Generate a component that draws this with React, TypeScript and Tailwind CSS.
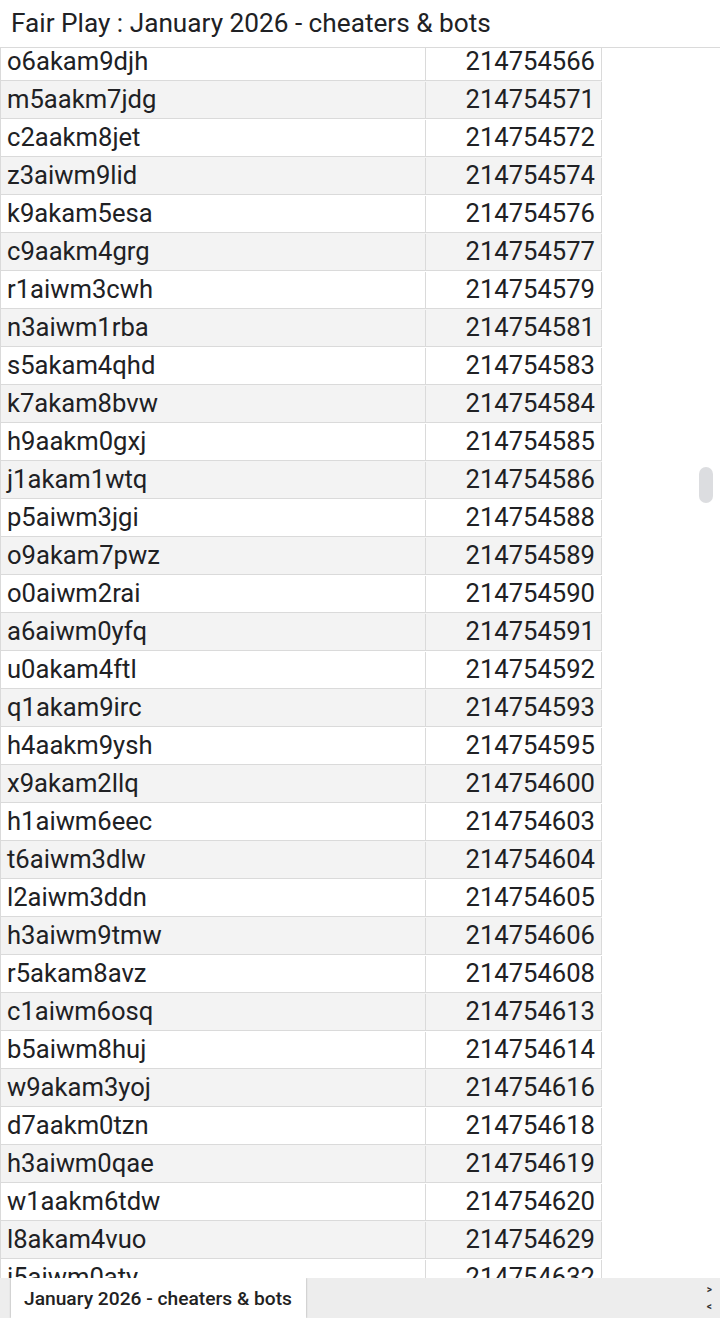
import React from "react";

const rows: [string, string][] = [
  ["o6akam9djh", "214754566"],
  ["m5aakm7jdg", "214754571"],
  ["c2aakm8jet", "214754572"],
  ["z3aiwm9lid", "214754574"],
  ["k9akam5esa", "214754576"],
  ["c9aakm4grg", "214754577"],
  ["r1aiwm3cwh", "214754579"],
  ["n3aiwm1rba", "214754581"],
  ["s5akam4qhd", "214754583"],
  ["k7akam8bvw", "214754584"],
  ["h9aakm0gxj", "214754585"],
  ["j1akam1wtq", "214754586"],
  ["p5aiwm3jgi", "214754588"],
  ["o9akam7pwz", "214754589"],
  ["o0aiwm2rai", "214754590"],
  ["a6aiwm0yfq", "214754591"],
  ["u0akam4ftl", "214754592"],
  ["q1akam9irc", "214754593"],
  ["h4aakm9ysh", "214754595"],
  ["x9akam2llq", "214754600"],
  ["h1aiwm6eec", "214754603"],
  ["t6aiwm3dlw", "214754604"],
  ["l2aiwm3ddn", "214754605"],
  ["h3aiwm9tmw", "214754606"],
  ["r5akam8avz", "214754608"],
  ["c1aiwm6osq", "214754613"],
  ["b5aiwm8huj", "214754614"],
  ["w9akam3yoj", "214754616"],
  ["d7aakm0tzn", "214754618"],
  ["h3aiwm0qae", "214754619"],
  ["w1aakm6tdw", "214754620"],
  ["l8akam4vuo", "214754629"],
  ["i5aiwm0aty", "214754632"],
  ["k2akam5xre", "214754633"],
];

export default function App() {
  return (
    <div className="flex h-[1318px] w-[720px] flex-col overflow-hidden bg-white font-['Roboto',sans-serif] text-[#202124]">
      <header className="flex h-[48px] shrink-0 items-center border-b border-[#dadada] pl-[11px]">
        <h1 className="text-[26.2px] leading-none">
          Fair Play : January 2026 - cheaters &amp; bots
        </h1>
      </header>

      <div className="relative flex-1 overflow-hidden">
        <div className="-mt-[5px] w-[602px] border-l border-[#dadada]">
          {rows.map(([name, id], i) => (
            <div
              key={name + id}
              className={`flex h-[38px] border-b border-[#dadada] pt-[1px] text-[25.6px] leading-none ${
                i % 2 === 1 ? "bg-[#f3f3f3]" : "bg-white"
              }`}
            >
              <div className="flex w-[425px] items-center border-r border-[#dadada] pl-[6px]">
                {name}
              </div>
              <div className="flex w-[176px] items-center justify-end border-r border-[#dadada] pr-[6px]">
                {id}
              </div>
            </div>
          ))}
        </div>

        {/* scroll thumb */}
        <div className="absolute left-[699px] top-[419px] h-[36px] w-[14px] rounded-full bg-[#dcdde0]" />
      </div>

      <footer className="flex h-[40px] shrink-0 bg-[#ededed]">
        <div className="ml-[11px] flex h-full w-[295px] items-center bg-white pl-[13px] pt-[2px] text-[19.2px] font-medium text-[#222] shadow-[0_0_2px_rgba(0,0,0,0.35)]">
          January 2026 - cheaters &amp; bots
        </div>
        <div className="ml-auto mr-[8px] flex flex-col justify-center gap-[7px] text-[10px] font-bold leading-none text-[#333]">
          <span>&gt;</span>
          <span>&lt;</span>
        </div>
      </footer>
    </div>
  );
}
